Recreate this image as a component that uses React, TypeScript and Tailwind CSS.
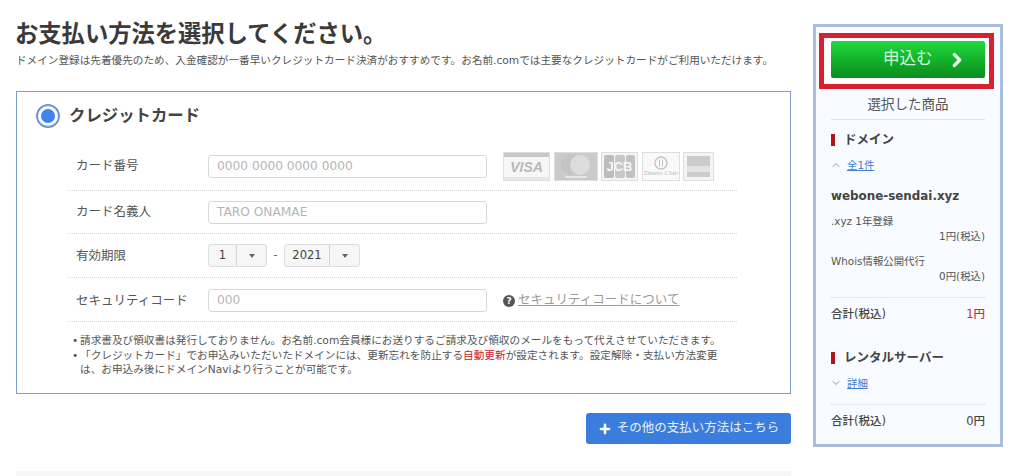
import React from 'react';
import { ChevronRight, ChevronUp, ChevronDown, Plus } from 'lucide-react';

const FONT = "font-['DejaVu_Sans','Noto_Sans_CJK_JP',sans-serif]";

const CardBox: React.FC<{ className: string; children: React.ReactNode }> = ({ className, children }) => (
  <div className={`h-[29px] flex flex-col items-center justify-center border border-[#dedede] overflow-hidden ${className}`}>
    {children}
  </div>
);

const CardLogos: React.FC = () => (
  <div className="flex items-center ml-[16px]">
    <CardBox className="w-[47px] bg-[#f6f6f6]">
      <div className="w-full h-[4px] bg-[#c8c8c8]" />
      <span className="flex-1 flex items-center font-['Liberation_Sans',sans-serif] italic font-bold text-[14px] leading-none text-[#b9b9b9]">VISA</span>
      <div className="w-full h-[3px] bg-[#e8e8e8]" />
    </CardBox>
    <CardBox className="w-[44px] ml-[4px] bg-[#cacaca]">
      <svg width="42" height="27" viewBox="0 0 42 27">
        <circle cx="16" cy="12" r="10" fill="#c4c4c4" />
        <circle cx="25" cy="12" r="10" fill="#dcdcdc" />
        <rect x="10" y="23" width="22" height="2" fill="#e4e4e4" />
      </svg>
    </CardBox>
    <CardBox className="w-[37px] ml-[3px] bg-[#f4f4f4]">
      <svg width="33" height="27" viewBox="0 0 33 27">
        <rect x="1" y="2" width="10" height="23" rx="2" fill="#bcbcbc" />
        <rect x="12" y="2" width="10" height="23" rx="2" fill="#c8c8c8" />
        <rect x="23" y="2" width="9" height="23" rx="2" fill="#c2c2c2" />
        <text x="16.5" y="18" textAnchor="middle" fontFamily="Liberation Sans" fontWeight="700" fontSize="13" fill="#f6f6f6">JCB</text>
      </svg>
    </CardBox>
    <CardBox className="w-[38px] ml-[4px] bg-[#f9f9f9]">
      <svg width="26" height="15" viewBox="0 0 26 15">
        <circle cx="13" cy="8" r="6" fill="none" stroke="#c4c4c4" strokeWidth="1.4" />
        <path d="M11.5 4.5v7M14.5 4.5v7" stroke="#c4c4c4" strokeWidth="1" />
      </svg>
      <span className="font-['Liberation_Serif',serif] text-[7px] leading-[7px] text-[#bcbcbc] whitespace-nowrap">Diners Club</span>
    </CardBox>
    <CardBox className="w-[31px] h-[28px] ml-[3px] p-[3px] bg-[#f4f4f4]">
      <div className="w-full h-full bg-[#cccccc] flex flex-col justify-end pb-[5px]">
        <div className="w-full h-[6px] bg-[#e2e2e2]" />
      </div>
    </CardBox>
  </div>
);

const FormRow: React.FC<{ label: string; className: string; children: React.ReactNode }> = ({ label, className, children }) => (
  <div className={`flex items-center pl-[8px] border-b border-dotted border-[#d4d4d4] ${className}`}>
    <span className="w-[132px] text-[12.5px] leading-[18px] text-[#555]">{label}</span>
    {children}
  </div>
);

const TextInput: React.FC<{ placeholder: string }> = ({ placeholder }) => (
  <div className="w-[279px] h-[23px] flex items-center px-[8px] border border-[#d8d8d8] rounded-[3px] bg-white text-[12.2px] text-[#b4b4b4]">
    {placeholder}
  </div>
);

const Select: React.FC<{ value: string; valueWidth: string }> = ({ value, valueWidth }) => (
  <div className="h-[23px] flex items-center border border-[#dddddd] rounded-[3px] bg-[#f6f6f6] text-[11.5px] text-[#444]">
    <span className={`h-full flex items-center justify-center border-r border-[#d4d4d4] ${valueWidth}`}>{value}</span>
    <span className="w-[29px] flex justify-center">
      <span className="w-0 h-0 border-x-[3px] border-x-transparent border-t-[4px] border-t-[#666]" />
    </span>
  </div>
);

const SectionTitle: React.FC<{ children: React.ReactNode }> = ({ children }) => (
  <div className="flex items-center gap-[9px]">
    <span className="w-[4px] h-[12px] bg-[#b0141c]" />
    <span className="text-[12.5px] leading-[18px] font-bold text-[#444]">{children}</span>
  </div>
);

const Total: React.FC<{ price: string; priceClass: string }> = ({ price, priceClass }) => (
  <div className="flex justify-between items-center text-[11.5px] leading-[16px] font-medium text-[#444]">
    <span>合計(税込)</span>
    <span className={priceClass}>{price}</span>
  </div>
);

export default function App() {
  return (
    <div className={`${FONT} h-[476px] overflow-hidden bg-white flex items-start pl-[16px] text-[#555]`}>
      {/* Main column */}
      <main className="w-[775px] shrink-0">
        <h1 className="mt-[16px] text-[23.3px] leading-[32px] font-bold text-[#3a3a3a] font-['Noto_Sans_CJK_JP',sans-serif] -ml-[1px] whitespace-nowrap">
          お支払い方法を選択してください。
        </h1>
        <p className="mt-[5px] text-[10.63px] leading-[16px] whitespace-nowrap text-[#555]">
          ドメイン登録は先着優先のため、入金確認が一番早いクレジットカード決済がおすすめです。お名前.comでは主要なクレジットカードがご利用いただけます。
        </p>

        <section className="mt-[22px] h-[303px] border border-[#7c9fc9] pl-[51px] pr-[53px]">
          <div className="flex items-center h-[47px] -ml-[32px]">
            <span className="w-[24px] h-[24px] rounded-full border-2 border-[#6f95dc] flex items-center justify-center">
              <span className="w-[14px] h-[14px] rounded-full bg-[#3f84ee]" />
            </span>
            <span className="ml-[9px] text-[16.4px] leading-[22px] font-bold text-[#444]">クレジットカード</span>
          </div>

          <FormRow label="カード番号" className="h-[52px] pt-[3px]">
            <TextInput placeholder="0000 0000 0000 0000" />
            <CardLogos />
          </FormRow>
          <FormRow label="カード名義人" className="h-[43px]">
            <TextInput placeholder="TARO ONAMAE" />
          </FormRow>
          <FormRow label="有効期限" className="h-[44px]">
            <Select value="1" valueWidth="w-[28px]" />
            <span className="w-[17px] text-center text-[11px]">-</span>
            <Select value="2021" valueWidth="w-[45px]" />
          </FormRow>
          <FormRow label="セキュリティコード" className="h-[44px] pt-[2px]">
            <TextInput placeholder="000" />
            <span className="ml-[16px] flex items-center gap-[3px] text-[12.5px] text-[#999]">
              <span className="w-[12px] h-[12px] rounded-full bg-[#555] text-white text-[9px] leading-[12px] font-bold text-center">?</span>
              <span className="underline">セキュリティコードについて</span>
            </span>
          </FormRow>

          <ul className="mt-[12px] ml-[4px] text-[10.65px] leading-[14.5px] text-[#555] whitespace-nowrap">
            <li className="flex"><span className="w-[8px] shrink-0">•</span>請求書及び領収書は発行しておりません。お名前.com会員様にお送りするご請求及び領収のメールをもって代えさせていただきます。</li>
            <li className="flex">
              <span className="w-[8px] shrink-0">•</span>
              <div>
                <p>「クレジットカード」でお申込みいただいたドメインには、更新忘れを防止する<span className="text-[#c8202c]">自動更新</span>が設定されます。設定解除・支払い方法変更</p>
                <p>は、お申込み後にドメインNaviより行うことが可能です。</p>
              </div>
            </li>
          </ul>
        </section>

        <div className="mt-[19px] flex justify-end">
          <button className="w-[205px] h-[31px] flex items-center justify-center gap-[5px] rounded-[3px] bg-[#3b7ddd] text-[12.5px] text-[#e8f0fc]">
            <Plus size={14} strokeWidth={4.5} className="text-white" />
            その他の支払い方法はこちら
          </button>
        </div>

        <div className="mt-[27px] h-[10px] bg-[#f6f6f6]" />
      </main>

      {/* Order summary */}
      <aside className="ml-[22px] mt-[24px] w-[190px] h-[423px] shrink-0 border-[3px] border-[#a9bedf] bg-[#f8fbff] px-[15px]">
        <div className="-ml-[12px] mt-[6px] h-[56px] w-[175px] border-[5px] border-[#d9202f] bg-white pl-[7px] pt-[3px]">
          <button className="w-[154px] h-[37px] flex items-center justify-start pl-[52px] rounded-[2px] bg-gradient-to-b from-[#1edb3c] to-[#0a8c1d] text-[16.5px] text-[#d5f5d8]">
            <span>申込む</span>
            <ChevronRight size={22} strokeWidth={3.5} className="ml-[13px] text-[#e9fbe9]" />
          </button>
        </div>

        <div className="h-[31px] flex items-center justify-center border-b border-[#dfe3e8] text-[13.5px] text-[#555]">選択した商品</div>

        <div className="mt-[11px]"><SectionTitle>ドメイン</SectionTitle></div>
        <div className="mt-[8px] flex items-center gap-[5px] text-[10.4px] leading-[16px]">
          <ChevronUp size={12} className="text-[#999] -ml-[1px]" />
          <span className="text-[#3f7fd0] underline">全1件</span>
        </div>
        <div className="mt-[14px] text-[11.9px] leading-[18px] font-bold text-[#444]">webone-sendai.xyz</div>
        <div className="mt-[8px] text-[10.4px] leading-[16px]">.xyz 1年登録</div>
        <div className="text-[10.4px] leading-[14px] text-right">1円(税込)</div>
        <div className="mt-[11px] text-[10.4px] leading-[15px]">Whois情報公開代行</div>
        <div className="text-[10.4px] leading-[14px] text-right">0円(税込)</div>
        <div className="mt-[14px] border-b border-dotted border-[#d8d8d8]" />
        <div className="mt-[8px]"><Total price="1円" priceClass="text-[#c5323c] font-medium" /></div>

        <div className="pt-[27px]"><SectionTitle>レンタルサーバー</SectionTitle></div>
        <div className="mt-[8px] flex items-center gap-[5px] text-[10.4px] leading-[16px]">
          <ChevronDown size={12} className="text-[#999] -ml-[1px]" />
          <span className="text-[#3f7fd0] underline">詳細</span>
        </div>
        <div className="mt-[13px] border-b border-dotted border-[#d8d8d8]" />
        <div className="mt-[8px]"><Total price="0円" priceClass="font-medium" /></div>
      </aside>
    </div>
  );
}
